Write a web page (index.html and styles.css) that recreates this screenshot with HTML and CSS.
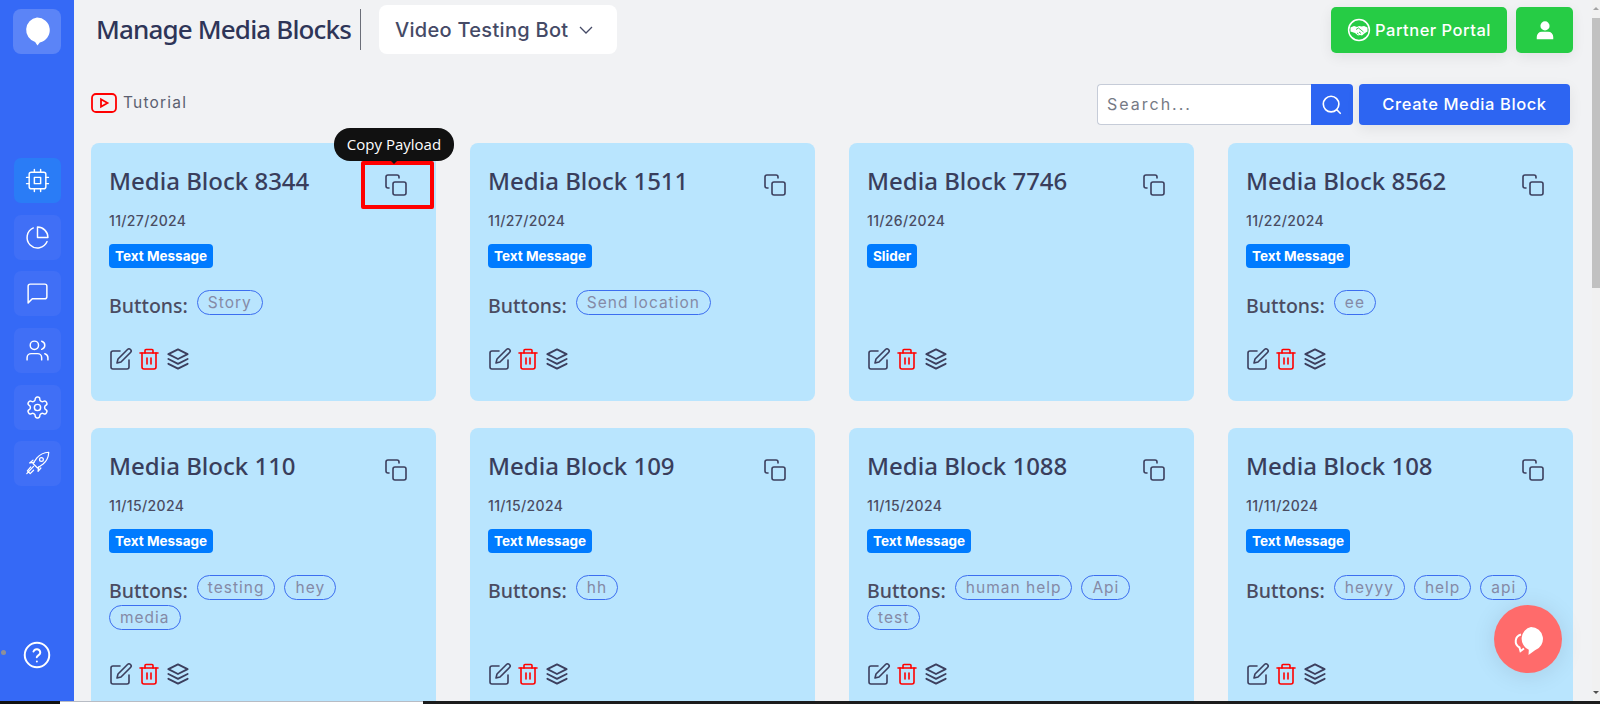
FILE: index.html
```html
<!DOCTYPE html>
<html lang="en">
<head>
<meta charset="utf-8">
<title>Manage Media Blocks</title>
<link rel="stylesheet" href="styles.css">
</head>
<body>
<svg class="defs" aria-hidden="true">
  <symbol id="i-copy" viewBox="0 0 24 24"><rect x="9" y="9" width="13" height="13" rx="2"/><path d="M5 15H4a2 2 0 0 1-2-2V4a2 2 0 0 1 2-2h9a2 2 0 0 1 2 2v1"/></symbol>
  <symbol id="i-edit" viewBox="0 0 24 24"><path d="M11 4H4a2 2 0 0 0-2 2v14a2 2 0 0 0 2 2h14a2 2 0 0 0 2-2v-7"/><path d="M18.5 2.5a2.121 2.121 0 0 1 3 3L12 15l-4 1 1-4 9.500-9.500z"/></symbol>
  <symbol id="i-trash" viewBox="0 0 24 24"><path d="M3 6h18"/><path d="M8 6V3.500a1 1 0 0 1 1-1h6a1 1 0 0 1 1 1V6"/><path d="M5 6v14a2 2 0 0 0 2 2h10a2 2 0 0 0 2-2V6"/><path d="M10 11v6"/><path d="M14 11v6"/></symbol>
  <symbol id="i-layers" viewBox="2 2 20 20"><path d="M12 4 4 8l8 4 8-4-8-4z"/><path d="m4 12 8 4 8-4"/><path d="m4 16 8 4 8-4"/></symbol>
</svg>

<div class="app">
  <aside class="sidebar">
    <div class="logo">
      <svg viewBox="0 0 30 32" width="28" height="31"><path class="solid" d="M15 1a13.500 13.500 0 0 1 3 26.700L15.500 31 13 27.300A13.500 13.500 0 0 1 15 1z"/></svg>
    </div>
    <nav class="nav">
      <a class="tile tile-active"><svg class="ico" viewBox="0 0 24 24"><rect x="4" y="4" width="16" height="16" rx="2"/><rect x="9" y="9" width="6" height="6"/><path d="M15 1.500V4M15 20v2.500M1.500 15H4M1.500 9H4M20 15h2.500M20 9h2.500M9 1.500V4M9 20v2.500"/></svg></a>
      <a class="tile"><svg class="ico" viewBox="0 0 24 24"><path d="M21.210 15.890A10 10 0 1 1 8 2.830"/><path d="M22 12A10 10 0 0 0 12 2v10z"/></svg></a>
      <a class="tile"><svg class="ico" viewBox="0 0 24 24"><path d="M21 15a2 2 0 0 1-2 2H7l-4 4V5a2 2 0 0 1 2-2h14a2 2 0 0 1 2 2z"/></svg></a>
      <a class="tile"><svg class="ico" viewBox="0 0 24 24"><path d="M16 21v-2a4 4 0 0 0-4-4H6a4 4 0 0 0-4 4v2"/><circle cx="9" cy="7" r="4"/><path d="M22 21v-2a4 4 0 0 0-3-3.870"/><path d="M16 3.130a4 4 0 0 1 0 7.750"/></svg></a>
      <a class="tile"><svg class="ico" viewBox="0 0 24 24"><path d="M12.220 2h-.44a2 2 0 0 0-2 2v.18a2 2 0 0 1-1 1.730l-.43.25a2 2 0 0 1-2 0l-.15-.08a2 2 0 0 0-2.730.73l-.22.38a2 2 0 0 0 .73 2.730l.15.1a2 2 0 0 1 1 1.720v.51a2 2 0 0 1-1 1.740l-.15.09a2 2 0 0 0-.73 2.730l.22.38a2 2 0 0 0 2.730.73l.15-.08a2 2 0 0 1 2 0l.43.25a2 2 0 0 1 1 1.730V20a2 2 0 0 0 2 2h.44a2 2 0 0 0 2-2v-.18a2 2 0 0 1 1-1.730l.43-.25a2 2 0 0 1 2 0l.15.08a2 2 0 0 0 2.730-.73l.22-.39a2 2 0 0 0-.73-2.730l-.15-.08a2 2 0 0 1-1-1.740v-.5a2 2 0 0 1 1-1.740l.15-.09a2 2 0 0 0 .73-2.730l-.22-.38a2 2 0 0 0-2.730-.73l-.15.08a2 2 0 0 1-2 0l-.43-.25a2 2 0 0 1-1-1.730V4a2 2 0 0 0-2-2z"/><circle cx="12" cy="12" r="3"/></svg></a>
      <a class="tile"><svg class="ico ico-thin" viewBox="0 0 24 24"><path d="M22 2c-4.500.2-8 2-10.500 5L8 12l4 4 5-3.500c3-2.500 4.800-6 5-10.500z"/><circle cx="15.500" cy="8.500" r="1.700"/><path d="M9 11l-4 .5L8 9M13 15l-.5 4 2.500-3"/><path d="M8.500 14.500 2.500 21M6 15l-3 3.500 2.500 2.500 3-3"/></svg></a>
    </nav>
    <a class="help"><svg class="ico ico-help" viewBox="0 0 24 24"><circle cx="12" cy="12" r="10.500"/><path d="M9 9a3 3 0 0 1 5.800 1c0 2-3 2.500-3 4"/><path d="M11.900 17.500h.01"/></svg></a>
    <span class="handle-dot"></span>
  </aside>

  <main class="main">
    <header class="topbar">
      <div class="title-group">
        <h1 class="page-title">Manage Media Blocks</h1>
        <span class="divider"></span>
        <button class="bot-select">Video Testing Bot
          <svg class="chev" viewBox="0 0 14 8"><path d="M1 1l6 6 6-6"/></svg>
        </button>
      </div>
      <div class="top-actions">
        <button class="green-btn partner">
          <svg class="shake" viewBox="0 0 24 24"><circle cx="12" cy="12" r="10.400"/><path class="solid" d="M3.500 9.500 7 8l3 1 2-1 2.500.5L17 8l3.500 1.500v4L18 15l-3 2.500-2-.5-2 .5-3-2.500-4.500-1.500z"/><path class="cut" d="M9 11.500l2.500-1.500 5 4M10 15l1.500 1M12 14l2 1.500"/></svg>
          Partner Portal
        </button>
        <button class="green-btn user">
          <svg viewBox="0 0 24 24" width="22" height="22"><circle class="solid" cx="12" cy="7.500" r="5"/><path class="solid" d="M3 22v-2.500A5.500 5.500 0 0 1 8.500 14h7a5.500 5.500 0 0 1 5.500 5.500V22z"/></svg>
        </button>
      </div>
    </header>

    <div class="toolbar">
      <a class="tutorial">
        <svg class="yt" viewBox="0 0 26 20"><rect x="1" y="1" width="24" height="18" rx="4"/><path d="M10 6.200v7.600l6.500-3.800z"/></svg>
        Tutorial
      </a>
      <div class="tools">
        <div class="search">
          <span class="search-input">Search...</span>
          <button class="search-btn"><svg class="ico ico-search" viewBox="0 0 24 24"><circle cx="11" cy="11" r="8.500"/><path d="m21 21-3.800-3.800"/></svg></button>
        </div>
        <button class="create-btn">Create Media Block</button>
      </div>
    </div>

    <section class="grid">
      <article class="card card-focus">
        <div class="card-head"><h2 class="card-title">Media Block 8344</h2><svg class="act copy"><use href="#i-copy"/></svg></div>
        <div class="date">11/27/2024</div>
        <span class="badge">Text Message</span>
        <div class="buttons"><span class="label">Buttons:</span><span class="chip">Story</span></div>
        <div class="card-actions"><svg class="act"><use href="#i-edit"/></svg><svg class="act red"><use href="#i-trash"/></svg><svg class="act"><use href="#i-layers"/></svg></div>
        <span class="focus-box"></span>
        <span class="tooltip">Copy Payload</span>
      </article>
      <article class="card">
        <div class="card-head"><h2 class="card-title">Media Block 1511</h2><svg class="act copy"><use href="#i-copy"/></svg></div>
        <div class="date">11/27/2024</div>
        <span class="badge">Text Message</span>
        <div class="buttons"><span class="label">Buttons:</span><span class="chip">Send location</span></div>
        <div class="card-actions"><svg class="act"><use href="#i-edit"/></svg><svg class="act red"><use href="#i-trash"/></svg><svg class="act"><use href="#i-layers"/></svg></div>
      </article>
      <article class="card">
        <div class="card-head"><h2 class="card-title">Media Block 7746</h2><svg class="act copy"><use href="#i-copy"/></svg></div>
        <div class="date">11/26/2024</div>
        <span class="badge">Slider</span>
        <div class="card-actions"><svg class="act"><use href="#i-edit"/></svg><svg class="act red"><use href="#i-trash"/></svg><svg class="act"><use href="#i-layers"/></svg></div>
      </article>
      <article class="card">
        <div class="card-head"><h2 class="card-title">Media Block 8562</h2><svg class="act copy"><use href="#i-copy"/></svg></div>
        <div class="date">11/22/2024</div>
        <span class="badge">Text Message</span>
        <div class="buttons"><span class="label">Buttons:</span><span class="chip">ee</span></div>
        <div class="card-actions"><svg class="act"><use href="#i-edit"/></svg><svg class="act red"><use href="#i-trash"/></svg><svg class="act"><use href="#i-layers"/></svg></div>
      </article>
      <article class="card">
        <div class="card-head"><h2 class="card-title">Media Block 110</h2><svg class="act copy"><use href="#i-copy"/></svg></div>
        <div class="date">11/15/2024</div>
        <span class="badge">Text Message</span>
        <div class="buttons"><span class="label">Buttons:</span><span class="chip">testing</span><span class="chip">hey</span><span class="chip">media</span></div>
        <div class="card-actions"><svg class="act"><use href="#i-edit"/></svg><svg class="act red"><use href="#i-trash"/></svg><svg class="act"><use href="#i-layers"/></svg></div>
      </article>
      <article class="card">
        <div class="card-head"><h2 class="card-title">Media Block 109</h2><svg class="act copy"><use href="#i-copy"/></svg></div>
        <div class="date">11/15/2024</div>
        <span class="badge">Text Message</span>
        <div class="buttons"><span class="label">Buttons:</span><span class="chip">hh</span></div>
        <div class="card-actions"><svg class="act"><use href="#i-edit"/></svg><svg class="act red"><use href="#i-trash"/></svg><svg class="act"><use href="#i-layers"/></svg></div>
      </article>
      <article class="card">
        <div class="card-head"><h2 class="card-title">Media Block 1088</h2><svg class="act copy"><use href="#i-copy"/></svg></div>
        <div class="date">11/15/2024</div>
        <span class="badge">Text Message</span>
        <div class="buttons"><span class="label">Buttons:</span><span class="chip">human help</span><span class="chip">Api</span><span class="chip">test</span></div>
        <div class="card-actions"><svg class="act"><use href="#i-edit"/></svg><svg class="act red"><use href="#i-trash"/></svg><svg class="act"><use href="#i-layers"/></svg></div>
      </article>
      <article class="card">
        <div class="card-head"><h2 class="card-title">Media Block 108</h2><svg class="act copy"><use href="#i-copy"/></svg></div>
        <div class="date">11/11/2024</div>
        <span class="badge">Text Message</span>
        <div class="buttons"><span class="label">Buttons:</span><span class="chip">heyyy</span><span class="chip">help</span><span class="chip">api</span></div>
        <div class="card-actions"><svg class="act"><use href="#i-edit"/></svg><svg class="act red"><use href="#i-trash"/></svg><svg class="act"><use href="#i-layers"/></svg></div>
      </article>
    </section>

    <button class="fab">
      <svg viewBox="0 0 34 30" width="34" height="30"><path class="fab-back" d="M10 8.500a7 7 0 0 0-1.500 13l1 3.500 3.500-2.500"/><path class="solid" d="M20 1a12 12 0 0 1 4 23.300L17.500 29l.3-5.300A12 12 0 0 1 20 1z"/></svg>
    </button>
  </main>

  <div class="scrollbar"><span class="scroll-up"></span><span class="thumb"></span><span class="scroll-down"></span></div>
</div>

<div class="taskbar"><span class="task-dark"></span><span class="task-light"></span></div>
</body>
</html>
```

FILE: styles.css
```css
* { box-sizing: border-box; }

html, body { height: 100%; margin: 0; }

body {
  display: flex;
  flex-direction: column;
  height: 704px;
  overflow: hidden;
  background: #f1f2f4;
  font-family: Inter, "Liberation Sans", sans-serif;
  color: #393e5c;
}

button { border: 0; font: inherit; cursor: pointer; }

.defs { position: absolute; width: 0; height: 0; }

.app { display: flex; flex: 1; min-height: 0; }

.solid { fill: #fff; stroke: none; }

.ico {
  width: 25px;
  height: 25px;
  fill: none;
  stroke: #fff;
  stroke-width: 1.400;
  stroke-linecap: round;
  stroke-linejoin: round;
}
.ico-thin { stroke-width: 1.100; width: 27px; height: 27px; }
.ico-help { stroke-width: 1.700; width: 28px; height: 28px; }
.ico-search { width: 22px; height: 22px; stroke-width: 1.800; }

/* Sidebar */
.sidebar {
  position: relative;
  display: flex;
  flex-direction: column;
  align-items: center;
  flex: 0 0 74px;
  background: #3569f6;
  padding-top: 9px;
}
.logo {
  display: flex;
  align-items: center;
  justify-content: center;
  width: 48px;
  height: 45px;
  border-radius: 8px;
  background: #5b84f7;
}
.nav {
  display: flex;
  flex-direction: column;
  gap: 11.700px;
  margin-top: 104px;
}
.tile {
  display: flex;
  align-items: center;
  justify-content: center;
  width: 47px;
  height: 45px;
  border-radius: 7px;
  background: #406ff6;
}
.tile-active { background: #2a7cf6; }
.help { display: flex; margin-top: 155px; }
.handle-dot {
  position: absolute;
  left: 1px;
  top: 650px;
  width: 5px;
  height: 5px;
  border-radius: 50%;
  background: #8e9099;
}

/* Main */
.main {
  position: relative;
  flex: 1;
  min-width: 0;
  overflow: hidden;
  padding-left: 17px;
}
.topbar {
  display: flex;
  justify-content: space-between;
  height: 49px;
  margin-top: 5px;
  padding-right: 19px;
}
.title-group { display: flex; align-items: center; padding-left: 5px; }
.page-title {
  margin: -2px 0 0;
  font-family: "Noto Sans", sans-serif;
  font-size: 26px;
  font-weight: 500;
  letter-spacing: -0.850px;
  color: #2e3558;
}
.divider { width: 1px; height: 41px; margin: 0 18px 0 9px; background: #6b6e78; }
.bot-select {
  display: flex;
  align-items: center;
  width: 238px;
  height: 49px;
  padding-left: 16px;
  border-radius: 8px;
  background: #fff;
  font-size: 20px;
  font-weight: 500;
  letter-spacing: 0.300px;
  color: #454a66;
}
.chev {
  width: 14px;
  height: 8px;
  margin-left: 11px;
  fill: none;
  stroke: #454a66;
  stroke-width: 1.300;
}
.top-actions { display: flex; gap: 9px; padding-top: 2px; }
.green-btn {
  display: flex;
  align-items: center;
  justify-content: center;
  height: 46px;
  border-radius: 5px;
  background: #26cc45;
  color: #fff;
  box-shadow: 0 4px 14px rgba(0, 0, 0, 0.07);
}
.partner { width: 176px; gap: 4px; font-size: 16.500px; font-weight: 500; letter-spacing: 0.500px; }
.user { width: 57px; }
.shake { width: 24px; height: 24px; fill: none; stroke: #fff; stroke-width: 1.500; }
.cut { stroke: #26cc45; stroke-width: 0.900; fill: none; }

.toolbar {
  display: flex;
  align-items: center;
  justify-content: space-between;
  height: 41px;
  margin-top: 30px;
  padding-right: 22px;
}
.tutorial {
  display: flex;
  align-items: center;
  gap: 6px;
  margin-top: -4px;
  font-size: 15.500px;
  letter-spacing: 1.200px;
  color: #5b5f70;
}
.yt { width: 26px; height: 20px; fill: none; stroke: #f00; stroke-width: 1.800; }
.tools { display: flex; gap: 6px; }
.search { display: flex; width: 256px; height: 41px; }
.search-input {
  flex: 1;
  display: flex;
  align-items: center;
  padding: 0 0 2px 9px;
  background: #fff;
  border: 1px solid #c6ccd8;
  border-right: 0;
  border-radius: 4px 0 0 4px;
  font-size: 16px;
  letter-spacing: 2px;
  color: #767a85;
}
.search-btn {
  display: flex;
  align-items: center;
  justify-content: center;
  width: 42px;
  background: #2d65f2;
  border-radius: 0 4px 4px 0;
}
.create-btn {
  width: 211px;
  height: 41px;
  padding-bottom: 3px;
  border-radius: 4px;
  background: #2d65f2;
  color: #fff;
  font-size: 16.500px;
  font-weight: 500;
  letter-spacing: 0.600px;
  box-shadow: 0 4px 14px rgba(0, 0, 0, 0.07);
}

/* Cards */
.grid {
  display: grid;
  grid-template-columns: repeat(4, 345px);
  gap: 27px 34px;
  margin-top: 18px;
}
.card {
  position: relative;
  display: flex;
  flex-direction: column;
  align-items: flex-start;
  padding: 20px 29px 30px 18px;
  border-radius: 8px;
  background: #b9e5fe;
}
.card-head { display: flex; justify-content: space-between; align-self: stretch; }
.card-title {
  margin: 0;
  font-family: "Noto Sans", sans-serif;
  font-size: 24px;
  line-height: 36px;
  font-weight: 500;
  color: #393e5c;
}
.act {
  flex: none;
  width: 24px;
  height: 24px;
  fill: none;
  stroke: #3c3f5e;
  stroke-width: 1.600;
  stroke-linecap: round;
  stroke-linejoin: round;
}
.act.red { stroke: #f00; }
.copy { margin-top: 10px; margin-right: -1px; }
.date {
  margin-top: 12px;
  font-size: 14px;
  line-height: 20px;
  font-weight: 500;
  letter-spacing: 0.350px;
  color: #4a4c62;
}
.badge {
  display: block;
  height: 24px;
  margin-top: 13px;
  padding: 0 6px;
  border-radius: 4px;
  background: #007bff;
  color: #fff;
  font-size: 13.500px;
  line-height: 24px;
  font-weight: 700;
}
.buttons {
  display: flex;
  flex-wrap: wrap;
  gap: 5px 9px;
  margin-top: 22px;
}
.label {
  height: 25px;
  font-family: "Noto Sans", sans-serif;
  font-size: 19.500px;
  line-height: 31px;
  font-weight: 500;
  color: #4b4c62;
}
.chip {
  height: 25px;
  padding: 0 10px;
  border: 1px solid #3c6ef0;
  border-radius: 13px;
  font-size: 15.500px;
  line-height: 23px;
  letter-spacing: 1px;
  color: #858aa6;
}
.card-actions { display: flex; gap: 4px; margin-top: auto; padding-top: 32px; }
.card-actions .act:last-child { margin-left: 1px; }

/* Overlays */
.focus-box {
  position: absolute;
  left: 270px;
  top: 18px;
  width: 73px;
  height: 48px;
  border: 4px solid #f00;
  border-radius: 2px;
}
.tooltip {
  position: absolute;
  left: 243px;
  top: -15px;
  width: 120px;
  height: 33px;
  border-radius: 16px;
  background: #111;
  color: #fff;
  font-family: "Open Sans", sans-serif;
  font-size: 15px;
  line-height: 33px;
  text-align: center;
}
.tooltip::after {
  content: "";
  position: absolute;
  left: 57px;
  top: 33px;
  border: 3px solid transparent;
  border-top-color: #111;
}
.fab {
  position: absolute;
  left: 1420px;
  top: 605px;
  display: flex;
  align-items: center;
  justify-content: center;
  width: 68px;
  height: 68px;
  padding: 4px 0 0;
  border-radius: 50%;
  background: #ff6b6b;
  box-shadow: 0 2px 24px rgba(0, 0, 0, 0.1);
}
.fab-back { fill: none; stroke: #fff; stroke-width: 2; }

/* Window chrome */
.scrollbar {
  position: relative;
  display: flex;
  flex-direction: column;
  align-items: center;
  flex: 0 0 8px;
  background: #f1f1f1;
}
.thumb { width: 8px; height: 270px; margin-top: 18px; background: #c1c1c1; }
.scroll-up, .scroll-down {
  position: absolute;
  left: 1px;
  border: 3px solid transparent;
}
.scroll-up { top: 4px; border-bottom-color: #a3a3a3; }
.scroll-down { bottom: 4px; border-top-color: #505050; }

.taskbar { display: flex; flex: 0 0 3px; background: #1c1c1c; }
.task-dark { width: 60px; background: #111; }
.task-light { width: 363px; background: #fff; border-top: 1px solid #b8bcc4; }
```
